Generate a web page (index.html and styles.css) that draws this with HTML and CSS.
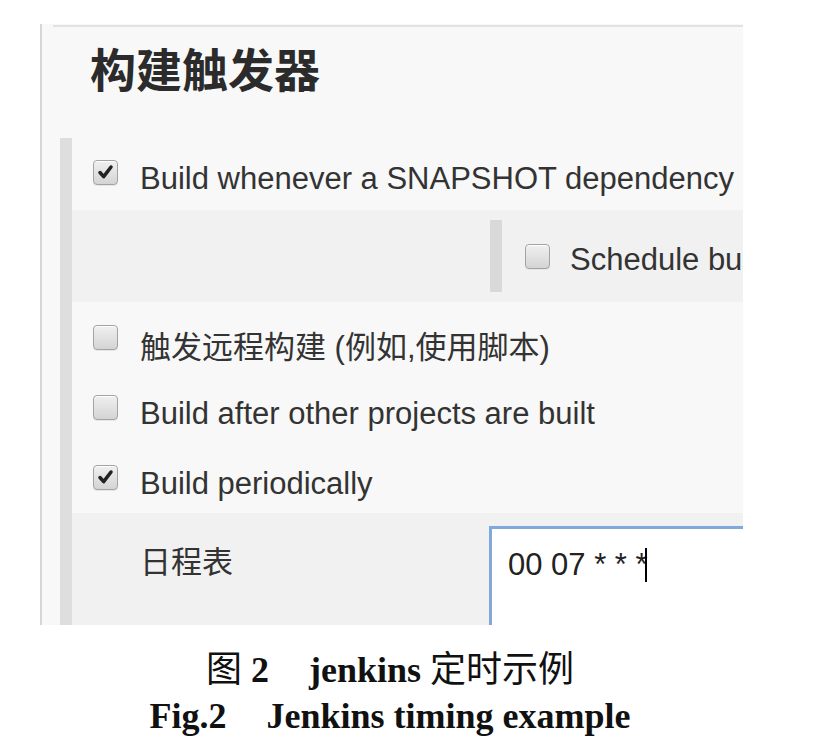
FILE: index.html
```html
<!DOCTYPE html>
<html lang="zh-CN">
<head>
    <meta charset="UTF-8">
    <meta name="viewport" content="width=device-width, initial-scale=1.0">
    <title>jenkins 定时示例</title>
    <link rel="stylesheet" href="styles.css">
</head>
<body>
    <!-- 截图区域 -->
    <div class="shot">
        <div class="shot-top"></div>
        <h1 class="title">构建触发器</h1>

        <div class="section">
            <div class="row row-first">
                <span class="cb checked"><svg viewBox="0 0 25 25"><path d="M6.5 12.5 L10.5 17 L18.5 6.5"/></svg></span>
                <span class="label">Build whenever a SNAPSHOT dependency is built</span>
            </div>

            <div class="band">
                <div class="nested">
                    <span class="cb"></span>
                    <span class="label">Schedule builds based on dependencies</span>
                </div>
            </div>

            <div class="row">
                <span class="cb"></span>
                <span class="label">触发远程构建 (例如,使用脚本)</span>
            </div>
            <div class="row">
                <span class="cb"></span>
                <span class="label">Build after other projects are built</span>
            </div>
            <div class="row">
                <span class="cb checked"><svg viewBox="0 0 25 25"><path d="M6.5 12.5 L10.5 17 L18.5 6.5"/></svg></span>
                <span class="label">Build periodically</span>
            </div>

            <div class="band schedule">
                <span class="field-name">日程表</span>
                <div class="field">00 07 * * *<span class="caret"></span></div>
            </div>
        </div>
    </div>

    <!-- 图注 -->
    <div class="caption">
        <p><span class="cn">图</span> 2<span class="gap"></span>jenkins <span class="cn">定时示例</span></p>
        <p>Fig.2<span class="gap"></span>Jenkins timing example</p>
    </div>
</body>
</html>
```

FILE: styles.css
```css
body {
    margin: 0;
    background-color: #ffffff;
    font-family: "Liberation Sans", "Noto Sans CJK SC", sans-serif;
    color: #333333;
}

.shot {
    margin: 24px 0 0 40px;
    width: 701px;
    height: 601px;
    border-left: 2px solid #d6d6d6;
    background-color: #f8f8f8;
    overflow: hidden;
}

.shot-top {
    height: 2px;
    margin: 1px 0 0 11px;
    background-color: #e2e2e2;
}

.title {
    margin: 21px 0 44px 48px;
    font-size: 46px;
    line-height: 46px;
    font-weight: bold;
    color: #2b2b2b;
}

.section {
    margin-left: 18px;
    border-left: 12px solid #dedede;
    font-size: 31px;
}

.row {
    display: flex;
    align-items: center;
    height: 70px;
    padding-left: 21px;
    white-space: nowrap;
}

.row-first {
    height: 72px;
    padding-bottom: 4px;
    box-sizing: border-box;
}

.label {
    margin-left: 22px;
    padding-top: 14px;
}

.cb {
    display: inline-block;
    flex: none;
    width: 23px;
    height: 23px;
    border: 1px solid #a3a3a3;
    border-radius: 4px;
    background: linear-gradient(#f0f0f0, #d4d4d4);
    box-shadow: inset 0 1px 0 #ffffff, 0 1px 0 #e6e6e6;
}

.cb svg {
    display: block;
    width: 23px;
    height: 23px;
}

.cb path {
    fill: none;
    stroke: #222222;
    stroke-width: 3.8;
    stroke-linecap: round;
    stroke-linejoin: round;
}

.band {
    background-color: #f1f1f1;
}

.band .nested {
    display: flex;
    align-items: center;
    height: 72px;
    margin: 0 0 0 418px;
    border-top: 10px solid #f1f1f1;
    border-bottom: 10px solid #f1f1f1;
    box-shadow: inset 12px 0 0 #d9d9d9;
    padding-left: 35px;
    white-space: nowrap;
}

.band .nested .label {
    margin-left: 20px;
    padding-top: 8px;
}

.schedule {
    display: flex;
    height: 112px;
    margin-top: 1px;
    padding-top: 13px;
    box-sizing: border-box;
}

.field-name {
    width: 349px;
    padding: 19px 0 0 68px;
    line-height: 35px;
    flex: none;
}

.field {
    flex: none;
    width: 320px;
    height: 120px;
    padding: 18px 0 0 16px;
    border-top: 3px solid #80a8dc;
    border-left: 3px solid #80a8dc;
    background-color: #ffffff;
    color: #222222;
    white-space: pre;
    line-height: 36px;
}

.caret {
    display: inline-block;
    width: 2px;
    height: 34px;
    margin-left: -3px;
    vertical-align: -7px;
    background-color: #000000;
}

.caption {
    width: 780px;
    margin-top: 22px;
    text-align: center;
    font-family: "Liberation Serif", "Noto Sans CJK SC", serif;
    font-size: 36px;
    font-weight: bold;
    color: #111111;
}

.caption p {
    margin: 0;
    line-height: 46px;
}

.caption .cn {
    font-family: "Noto Sans CJK SC", sans-serif;
    font-weight: normal;
    line-height: 1;
}

.gap {
    display: inline-block;
    width: 40px;
}
```
